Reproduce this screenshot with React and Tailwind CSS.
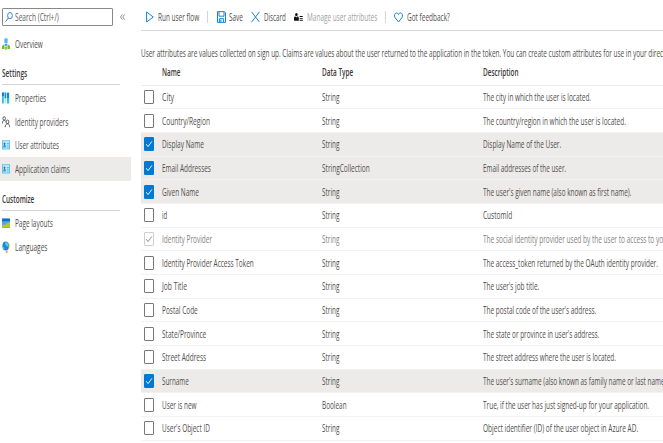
import { useLayoutEffect, useRef, useState } from "react";

// Condenses a line of text horizontally so that it fills exactly w pixels.
function Fit({ w, children, className = "" }) {
  const ref = useRef(null);
  const [scale, setScale] = useState(0.8);
  useLayoutEffect(() => {
    const update = () => setScale(w / ref.current.offsetWidth);
    update();
    document.fonts?.ready.then(() => ref.current && update());
  }, [w]);
  return (
    <span className={"block shrink-0 whitespace-nowrap " + className} style={{ width: w }}>
      <span ref={ref} className="inline-block origin-left" style={{ transform: `scaleX(${scale})` }}>
        {children}
      </span>
    </span>
  );
}

function OverviewIcon() {
  return (
    <svg viewBox="0 0 8 12" className="h-3 w-2" fill="none">
      <path d="M4 4v3M1.5 9V7h5v2" stroke="#5ea0ef" strokeWidth=".8" />
      <rect x="2.3" y=".3" width="3.4" height="4.8" rx=".8" fill="#50bdf0" />
      <path d="M3.3 6h1.4v2H3.3z" fill="#2f8fe0" />
      <rect x="0" y="7.6" width="2.5" height="3.4" rx=".5" fill="#76bc2d" />
      <rect x="2.8" y="8.6" width="2.4" height="3.2" rx=".5" fill="#86d633" />
      <rect x="5.5" y="7.6" width="2.5" height="3.4" rx=".5" fill="#76bc2d" />
    </svg>
  );
}

function PropertiesIcon() {
  return (
    <svg viewBox="0 0 8 12" className="h-3 w-2">
      <rect x="0" y=".5" width="1.8" height="11" fill="#37b8e8" />
      <rect x="2.5" y=".5" width="1.8" height="6" fill="#1490df" />
      <rect x="2.5" y="7" width="1.8" height="4.5" fill="#b5e9fa" />
      <rect x="5" y=".5" width="2.2" height="11" fill="#32bedd" />
      <rect x="0" y=".5" width="1.8" height="3.5" fill="#0f78d4" />
      <rect x="5.2" y="1" width="1.6" height="5" fill="#0f78d4" />
    </svg>
  );
}

function PeopleIcon() {
  return (
    <svg viewBox="0 0 8 12" className="h-3 w-2" fill="none" stroke="#444" strokeWidth=".85">
      <ellipse cx="2.2" cy="2.4" rx="1.3" ry="1.7" />
      <path d="M.4 7.5C.4 5.3 1 4.5 2.2 4.5c.8 0 1.3.4 1.6 1" />
      <ellipse cx="5.5" cy="5.8" rx="1.4" ry="1.8" />
      <path d="M3.2 11.2C3.4 8.8 4.2 7.8 5.5 7.8s2 1 2.2 3.4" />
    </svg>
  );
}

function CardIcon() {
  return (
    <svg viewBox="0 0 8 10" className="h-2.5 w-2">
      <rect x=".3" y=".8" width="7.4" height="8.2" fill="#c8effb" stroke="#32aee0" strokeWidth=".7" />
      <ellipse cx="2.5" cy="3.8" rx="1" ry="1.3" fill="#167fce" />
      <path d="M1.2 7.5c0-2 .4-2.4 1.3-2.4s1.4.4 1.4 2.4z" fill="#2696d8" />
      <path d="M4.8 3.5h2M4.8 5.2h2M4.8 7h2" stroke="#33a7de" strokeWidth=".8" />
    </svg>
  );
}

function LayoutIcon() {
  return (
    <svg viewBox="0 0 8 10" className="h-2.5 w-2">
      <rect y=".6" width="8" height="8.8" fill="#4aa9e8" />
      <rect y=".6" width="8" height="2.6" fill="#0f6fc4" />
      <path d="M0 9.4V7.5l2-1.2 1.5.7 2-2.3L8 4.2v5.2z" fill="#b9c72b" />
      <path d="M0 9h8v.4H0z" fill="#5e9624" />
    </svg>
  );
}

function LanguagesIcon() {
  return (
    <svg viewBox="0 0 8 12" className="h-3 w-2">
      <path d="M3.8 10h1.8v1.8H3.8z" fill="#e8a23c" />
      <path d="M5 .6c3.4 1.2 3.4 7.7-.2 9.2z" fill="#f0a63c" />
      <ellipse cx="3.5" cy="5" rx="3.1" ry="4.5" fill="#1688d8" />
      <path d="M3.7.8c2.4.6 2.9 3.2 2.4 5L4.3 5 3 3z" fill="#57c8f2" />
      <path d="M.8 5.5 2.6 7l-.3 1.8C1.2 8 .8 7 .8 5.5z" fill="#57c8f2" />
    </svg>
  );
}

function NavItem({ icon, label, w, active = false }) {
  return (
    <div className={"flex h-[23.7px] w-[131px] items-center pl-0.5 " + (active ? "bg-[#edebe9]" : "")}>
      <span className="flex w-[13px] shrink-0">{icon}</span>
      <Fit w={w}>{label}</Fit>
    </div>
  );
}

function NavHeading({ label, w }) {
  return (
    <div className="ml-0.5 flex h-[23px] w-[118px] items-center border-b border-[#d6d5d4] font-semibold text-[#3b3a39]">
      <Fit w={w}>{label}</Fit>
    </div>
  );
}

function Sidebar() {
  return (
    <aside className="w-[141px] shrink-0 pt-[8px]">
      <div className="flex items-center">
        <div className="ml-0.5 flex h-[18px] w-[111px] items-center rounded-[1px] border border-[#8a8886] pl-[2px] text-[#605e5c]">
          <svg viewBox="0 0 8 12" className="mr-[2px] h-3 w-2" fill="none" stroke="#2b88d8" strokeWidth="1">
            <ellipse cx="5" cy="4.6" rx="2.4" ry="3.1" />
            <path d="M3.3 7 .5 10.7" />
          </svg>
          <Fit w={44}>Search (Ctrl+/)</Fit>
        </div>
        <svg viewBox="0 0 5 6" className="ml-[7px] h-1.5 w-[5px]" fill="none" stroke="#777" strokeWidth=".8">
          <path d="M2.3.4.5 3l1.8 2.6M4.6.4 2.8 3l1.8 2.6" />
        </svg>
      </div>
      <nav className="mt-[6px]">
        <NavItem icon={<OverviewIcon />} label="Overview" w={28} />
        <div className="h-[6.5px]" />
        <NavHeading label="Settings" w={25.5} />
        <div className="h-[0.8px]" />
        <NavItem icon={<PropertiesIcon />} label="Properties" w={31} />
        <NavItem icon={<PeopleIcon />} label="Identity providers" w={53} />
        <NavItem icon={<CardIcon />} label="User attributes" w={44} />
        <NavItem icon={<CardIcon />} label="Application claims" w={55} active />
        <div className="h-[7px]" />
        <NavHeading label="Customize" w={32.5} />
        <div className="h-[0.8px]" />
        <NavItem icon={<LayoutIcon />} label="Page layouts" w={38} />
        <NavItem icon={<LanguagesIcon />} label="Languages" w={32.5} />
      </nav>
    </aside>
  );
}

function Toolbar() {
  return (
    <div className="flex h-[31px] items-center border-b border-[#d6d5d4] pt-[4px] pl-[5px]">
      <svg viewBox="0 0 8 12" className="h-3 w-2" fill="none" stroke="#1683d8" strokeWidth="1">
        <path d="M.6 1v10L7.3 6z" />
      </svg>
      <Fit w={41} className="ml-[4px]">Run user flow</Fit>
      <span className="ml-[8px] h-3 w-px bg-[#d6d5d4]" />
      <svg viewBox="0 0 9 12" className="ml-[9px] h-3 w-[9px]" fill="none" stroke="#1683d8" strokeWidth="1">
        <path d="M.5.6h7l1 1.2v9.6h-8zM2 .8v4.4h5V.8M2.4 11V7.7h4.2V11M3.9 8.5V11" />
      </svg>
      <Fit w={14} className="ml-[3px]">Save</Fit>
      <svg viewBox="0 0 9 12" className="ml-[8px] h-3 w-[9px]" fill="none" stroke="#1683d8" strokeWidth="1">
        <path d="m.5.8 8 10.4m0-10.4-8 10.4" />
      </svg>
      <Fit w={22} className="ml-[4px]">Discard</Fit>
      <svg viewBox="0 0 9 10" className="ml-[8px] h-2.5 w-[9px]" fill="#111">
        <ellipse cx="2.4" cy="2.6" rx="1.3" ry="1.7" />
        <path d="M0 8.7V5.8c0-1 .8-1.4 1.5-1.4l.9 1 .9-1c.8 0 1.5.4 1.5 1.4v2.9z" />
        <path d="M5.6 4h3.2v1H5.6zm0 1.9h3.2v.9H5.6zm0 1.9h3.2v.9H5.6z" />
      </svg>
      <Fit w={70} className="ml-[4px] text-[#a19f9d]">Manage user attributes</Fit>
      <span className="ml-[8px] h-3 w-px bg-[#d6d5d4]" />
      <svg viewBox="0 0 9 11" className="ml-[8px] h-[11px] w-[9px]" fill="none" stroke="#1683d8" strokeWidth="1">
        <path d="M4.5 10 1 5.5C-.2 3.6.8.9 2.5.9c1 0 1.6.8 2 1.7.4-.9 1-1.7 2-1.7C8.2.9 9.2 3.6 8 5.5z" />
      </svg>
      <Fit w={43} className="ml-[4px]">Got feedback?</Fit>
    </div>
  );
}

const claims = [
  ["City", 12, "String", 17.5, "The city in which the user is located.", 108, ""],
  ["Country/Region", 48, "String", 17.5, "The country/region in which the user is located.", 143, ""],
  ["Display Name", 42, "String", 17.5, "Display Name of the User.", 78, "checked"],
  ["Email Addresses", 49, "StringCollection", 48, "Email addresses of the user.", 83, "checked"],
  ["Given Name", 37, "String", 17.5, "The user's given name (also known as first name).", 148.5, "checked"],
  ["id", 5.5, "String", 17.5, "CustomId", 29, ""],
  ["Identity Provider", 50, "String", 17.5, "The social identity provider used by the user to access to your", 187, "disabled"],
  ["Identity Provider Access Token", 91.5, "String", 17.5, "The access_token returned by the OAuth identity provider.", 175, ""],
  ["Job Title", 25, "String", 17.5, "The user's job title.", 56, ""],
  ["Postal Code", 36, "String", 17.5, "The postal code of the user's address.", 113, ""],
  ["State/Province", 44, "String", 17.5, "The state or province in user's address.", 116, ""],
  ["Street Address", 44, "String", 17.5, "The street address where the user is located.", 133, ""],
  ["Surname", 27, "String", 17.5, "The user's surname (also known as family name or last name).", 185, "checked"],
  ["User is new", 34.5, "Boolean", 24.5, "True, if the user has just signed-up for your application.", 166, ""],
  ["User's Object ID", 48, "String", 17.5, "Object identifier (ID) of the user object in Azure AD.", 155, ""],
];

const boxStyles = {
  "": "border-[#7a7876] bg-white",
  checked: "border-[#0078d4] bg-[#0078d4] text-white",
  disabled: "border-[#d2d0ce] bg-white text-[#8a8886]",
};

function Checkbox({ state }) {
  return (
    <span className={"flex h-[14px] w-[10px] items-center justify-center rounded-[1px] border " + boxStyles[state]}>
      {state && (
        <svg viewBox="0 0 8 8" className="h-2 w-2 shrink-0" fill="none" stroke="currentColor" strokeWidth=".9">
          <path d="m1.2 4.2 1.9 2.4L6.9 1.4" />
        </svg>
      )}
    </span>
  );
}

function ClaimRow({ claim }) {
  const [name, nameW, type, typeW, text, textW, state] = claim;
  return (
    <div
      className={
        "grid h-[23.7px] grid-cols-[18px_160px_161px_1fr] items-center border-b border-[#f3f2f1] pl-[3px] " +
        (state === "checked" ? "bg-[#edebe9]" : state === "disabled" ? "text-[#84827f]" : "")
      }
    >
      <Checkbox state={state} />
      <Fit w={nameW}>{name}</Fit>
      <Fit w={typeW}>{type}</Fit>
      <Fit w={textW}>{text}</Fit>
    </div>
  );
}

export default function App() {
  return (
    <div className="flex h-[443px] w-[663px] overflow-hidden bg-white font-['Open_Sans','Noto_Sans',sans-serif] text-[11px] leading-[14px] text-[#504e4c]">
      <Sidebar />
      <main className="w-[522px] shrink-0 overflow-hidden">
        <Toolbar />
        <div className="pt-[15px]">
          <Fit w={536}>
            User attributes are values collected on sign up. Claims are values about the user returned to the
            application in the token. You can create custom attributes for use in your directory.
          </Fit>
        </div>
        <div className="grid h-[25.5px] grid-cols-[18px_160px_161px_1fr] items-center border-b border-[#edebe9] pl-[3px] font-semibold text-[#3b3a39]">
          <span />
          <Fit w={18.5}>Name</Fit>
          <Fit w={31}>Data Type</Fit>
          <Fit w={35.5}>Description</Fit>
        </div>
        {claims.map((claim) => (
          <ClaimRow key={claim[0]} claim={claim} />
        ))}
      </main>
    </div>
  );
}
